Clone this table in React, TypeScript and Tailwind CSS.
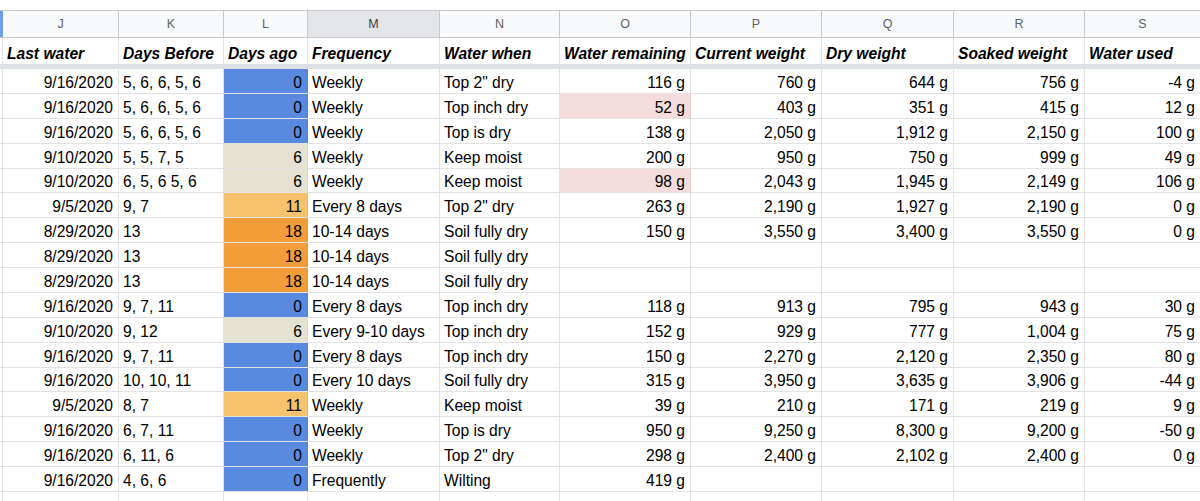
import React from "react";

type Cell = { v: string; bg?: string };

const widths = [116, 105, 84, 132, 120, 131, 131, 132, 131, 116];
const letters = ["J", "K", "L", "M", "N", "O", "P", "Q", "R", "S"];
const heads = [
  "Last water",
  "Days Before",
  "Days ago",
  "Frequency",
  "Water when",
  "Water remaining",
  "Current weight",
  "Dry weight",
  "Soaked weight",
  "Water used",
];
// alignment: right for J, L, O..S ; left for K, M, N
const rightAlign = [true, false, true, false, false, true, true, true, true, true];

const BLUE = "bg-[#5a8ae0]";
const BEIGE = "bg-[#e5e2d4]";
const LORANGE = "bg-[#f6c36c]";
const ORANGE = "bg-[#f29d39]";
const PINK = "bg-[#f5dcdc]";

const rows: Cell[][] = [
  [{ v: "9/16/2020" }, { v: "5, 6, 6, 5, 6" }, { v: "0", bg: BLUE }, { v: "Weekly" }, { v: 'Top 2" dry' }, { v: "116 g" }, { v: "760 g" }, { v: "644 g" }, { v: "756 g" }, { v: "-4 g" }],
  [{ v: "9/16/2020" }, { v: "5, 6, 6, 5, 6" }, { v: "0", bg: BLUE }, { v: "Weekly" }, { v: "Top inch dry" }, { v: "52 g", bg: PINK }, { v: "403 g" }, { v: "351 g" }, { v: "415 g" }, { v: "12 g" }],
  [{ v: "9/16/2020" }, { v: "5, 6, 6, 5, 6" }, { v: "0", bg: BLUE }, { v: "Weekly" }, { v: "Top is dry" }, { v: "138 g" }, { v: "2,050 g" }, { v: "1,912 g" }, { v: "2,150 g" }, { v: "100 g" }],
  [{ v: "9/10/2020" }, { v: "5, 5, 7, 5" }, { v: "6", bg: BEIGE }, { v: "Weekly" }, { v: "Keep moist" }, { v: "200 g" }, { v: "950 g" }, { v: "750 g" }, { v: "999 g" }, { v: "49 g" }],
  [{ v: "9/10/2020" }, { v: "6, 5, 6 5, 6" }, { v: "6", bg: BEIGE }, { v: "Weekly" }, { v: "Keep moist" }, { v: "98 g", bg: PINK }, { v: "2,043 g" }, { v: "1,945 g" }, { v: "2,149 g" }, { v: "106 g" }],
  [{ v: "9/5/2020" }, { v: "9, 7" }, { v: "11", bg: LORANGE }, { v: "Every 8 days" }, { v: 'Top 2" dry' }, { v: "263 g" }, { v: "2,190 g" }, { v: "1,927 g" }, { v: "2,190 g" }, { v: "0 g" }],
  [{ v: "8/29/2020" }, { v: "13" }, { v: "18", bg: ORANGE }, { v: "10-14 days" }, { v: "Soil fully dry" }, { v: "150 g" }, { v: "3,550 g" }, { v: "3,400 g" }, { v: "3,550 g" }, { v: "0 g" }],
  [{ v: "8/29/2020" }, { v: "13" }, { v: "18", bg: ORANGE }, { v: "10-14 days" }, { v: "Soil fully dry" }, { v: "" }, { v: "" }, { v: "" }, { v: "" }, { v: "" }],
  [{ v: "8/29/2020" }, { v: "13" }, { v: "18", bg: ORANGE }, { v: "10-14 days" }, { v: "Soil fully dry" }, { v: "" }, { v: "" }, { v: "" }, { v: "" }, { v: "" }],
  [{ v: "9/16/2020" }, { v: "9, 7, 11" }, { v: "0", bg: BLUE }, { v: "Every 8 days" }, { v: "Top inch dry" }, { v: "118 g" }, { v: "913 g" }, { v: "795 g" }, { v: "943 g" }, { v: "30 g" }],
  [{ v: "9/10/2020" }, { v: "9, 12" }, { v: "6", bg: BEIGE }, { v: "Every 9-10 days" }, { v: "Top inch dry" }, { v: "152 g" }, { v: "929 g" }, { v: "777 g" }, { v: "1,004 g" }, { v: "75 g" }],
  [{ v: "9/16/2020" }, { v: "9, 7, 11" }, { v: "0", bg: BLUE }, { v: "Every 8 days" }, { v: "Top inch dry" }, { v: "150 g" }, { v: "2,270 g" }, { v: "2,120 g" }, { v: "2,350 g" }, { v: "80 g" }],
  [{ v: "9/16/2020" }, { v: "10, 10, 11" }, { v: "0", bg: BLUE }, { v: "Every 10 days" }, { v: "Soil fully dry" }, { v: "315 g" }, { v: "3,950 g" }, { v: "3,635 g" }, { v: "3,906 g" }, { v: "-44 g" }],
  [{ v: "9/5/2020" }, { v: "8, 7" }, { v: "11", bg: LORANGE }, { v: "Weekly" }, { v: "Keep moist" }, { v: "39 g" }, { v: "210 g" }, { v: "171 g" }, { v: "219 g" }, { v: "9 g" }],
  [{ v: "9/16/2020" }, { v: "6, 7, 11" }, { v: "0", bg: BLUE }, { v: "Weekly" }, { v: "Top is dry" }, { v: "950 g" }, { v: "9,250 g" }, { v: "8,300 g" }, { v: "9,200 g" }, { v: "-50 g" }],
  [{ v: "9/16/2020" }, { v: "6, 11, 6" }, { v: "0", bg: BLUE }, { v: "Weekly" }, { v: 'Top 2" dry' }, { v: "298 g" }, { v: "2,400 g" }, { v: "2,102 g" }, { v: "2,400 g" }, { v: "0 g" }],
  [{ v: "9/16/2020" }, { v: "4, 6, 6" }, { v: "0", bg: BLUE }, { v: "Frequently" }, { v: "Wilting" }, { v: "419 g" }, { v: "" }, { v: "" }, { v: "" }, { v: "" }],
  [{ v: "" }, { v: "" }, { v: "" }, { v: "" }, { v: "" }, { v: "" }, { v: "" }, { v: "" }, { v: "" }, { v: "" }],
];

const font = { fontFamily: '"Liberation Sans", Arial, sans-serif' };

export default function App() {
  return (
    <div className="w-[1200px] h-[501px] overflow-hidden bg-white text-black" style={font}>
      {/* top strip */}
      <div className="h-[11px] border-b border-[#c8c8c8] bg-white" />
      {/* column letters */}
      <div className="flex h-[27px] border-b border-[#c8c8c8] bg-[#f8f9fa]">
        <div className="w-[3px] shrink-0 bg-[#6f9be8]" />
        {letters.map((l, i) => (
          <div
            key={l}
            style={{ width: widths[i] }}
            className={`shrink-0 flex items-center justify-center border-r border-[#c8c8c8] text-[12.5px] ${
              l === "M" ? "bg-[#e4e5e8] text-[#3c4043]" : "text-[#5f6368]"
            }`}
          >
            {l}
          </div>
        ))}
      </div>
      {/* header row */}
      <div className="flex h-[26px]">
        <div className="w-[3px] shrink-0 border-r border-[#e2e2e2]" />
        {heads.map((h, i) => (
          <div
            key={h}
            style={{ width: widths[i] }}
            className="shrink-0 flex items-end pb-[2px] px-[4px] border-r border-[#e2e2e2] text-[15.6px] leading-[17px] font-bold italic whitespace-nowrap overflow-hidden"
          >
            {h}
          </div>
        ))}
      </div>
      {/* frozen separator */}
      <div className="h-[5px] bg-[#dde1e6]" />
      {/* data rows */}
      {rows.map((r, ri) => (
        <div key={ri} className="flex h-[24.875px] border-b border-[#e2e2e2]">
          <div className="w-[3px] shrink-0 border-r border-[#e2e2e2]" />
          {r.map((c, ci) => (
            <div
              key={ci}
              style={{ width: widths[ci] }}
              className={`shrink-0 flex items-end pb-[2px] pl-[4px] pr-[5px] border-r whitespace-nowrap overflow-hidden text-[15.6px] leading-[17px] ${
                rightAlign[ci] ? "justify-end" : "justify-start"
              } ${c.bg ? `${c.bg} border-black/5` : "border-[#e2e2e2]"}`}
            >
              {c.v}
            </div>
          ))}
        </div>
      ))}
    </div>
  );
}
